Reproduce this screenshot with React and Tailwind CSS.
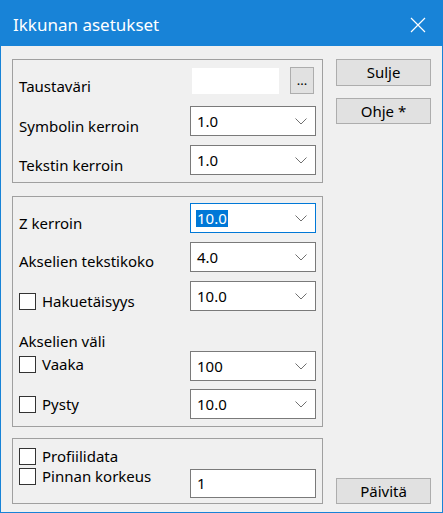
import { useState } from "react";

const font = { fontFamily: '"Noto Sans", "Open Sans", sans-serif' };

function Chevron() {
  return (
    <svg width="12" height="7" viewBox="0 0 12 7" className="shrink-0">
      <path d="M0.5 0.5 L6 6 L11.5 0.5" fill="none" stroke="#707070" strokeWidth="1" />
    </svg>
  );
}

function Combo({ value, focused }) {
  return (
    <div
      className={
        "w-[126px] h-[30px] bg-white flex items-center pl-[6px] pr-[8px] justify-between border " +
        (focused ? "border-[#0078d7]" : "border-[#7a7a7a]")
      }
    >
      {focused ? (
        <span className="bg-[#0078d7] text-white leading-[17px] px-[1px] -ml-[1px]">{value}</span>
      ) : (
        <span className="text-black">{value}</span>
      )}
      <Chevron />
    </div>
  );
}

function Check({ label }) {
  const [on, setOn] = useState(false);
  return (
    <label className="flex items-center cursor-default" onClick={() => setOn(!on)}>
      <span className="w-[17px] h-[17px] border border-[#333] bg-white flex items-center justify-center">
        {on && <span className="w-[9px] h-[9px] bg-[#333]" />}
      </span>
      <span className="ml-[6px] text-black">{label}</span>
    </label>
  );
}

function Row({ children, control, className = "", labelClass = "pt-[10px]" }) {
  return (
    <div className={"flex items-center h-[30px] " + className}>
      <div className={"w-[177px] pl-[6px] text-black " + labelClass}>{children}</div>
      {control}
    </div>
  );
}

function Button({ children, className = "" }) {
  return (
    <button
      className={
        "w-[95px] bg-[#e1e1e1] border border-[#adadad] text-black flex items-center justify-center " +
        className
      }
    >
      {children}
    </button>
  );
}

export default function App() {
  return (
    <div
      className="w-[443px] h-[513px] border border-[#1883d7] bg-[#f0f0f0] flex flex-col text-[15px]"
      style={font}
    >
      <div className="h-[45px] bg-[#1883d7] flex items-center justify-between pl-[12px] pr-[16px] shrink-0">
        <span className="text-white text-[17px] pt-[3px]">Ikkunan asetukset</span>
        <svg width="16" height="16" viewBox="0 0 16 16" className="mt-[3px]">
          <path d="M1 1 L15 15 M15 1 L1 15" stroke="#fff" strokeWidth="1.2" />
        </svg>
      </div>

      <div className="flex pl-[11px] pt-[13px] pb-[8px] flex-1">
        <div className="w-[311px] flex flex-col">
          <div className="border border-[#a0a0a0] h-[124px] pt-[7px] pr-[6px]">
            <div className="flex items-center h-[27px]">
              <div className="w-[177px] pl-[6px] pt-[12px] text-black">Taustaväri</div>
              <div className="w-[87px] h-[26px] bg-white ml-[2px]" />
              <button className="w-[24px] h-[27px] ml-[11px] bg-[#e1e1e1] border border-[#adadad] text-black text-[13px] leading-none flex items-end justify-center pb-[6px]">
                ...
              </button>
            </div>
            <Row className="mt-[12px]" control={<Combo value="1.0" />}>
              Symbolin kerroin
            </Row>
            <Row className="mt-[9px]" control={<Combo value="1.0" />}>
              Tekstin kerroin
            </Row>
          </div>

          <div className="border border-[#a0a0a0] h-[231px] mt-[13px] pt-[6px]">
            <Row control={<Combo value="10.0" focused />}>Z kerroin</Row>
            <Row className="mt-[9px]" labelClass="pt-[8px]" control={<Combo value="4.0" />}>
              Akselien tekstikoko
            </Row>
            <Row className="mt-[9px]" control={<Combo value="10.0" />}>
              <Check label="Hakuetäisyys" />
            </Row>
            <div className="h-[19px] leading-[19px] mt-[21px] pl-[6px] text-black">Akselien väli</div>
            <Row labelClass="pb-[4px]" control={<Combo value="100" />}>
              <Check label="Vaaka" />
            </Row>
            <Row className="mt-[8px]" labelClass="" control={<Combo value="10.0" />}>
              <Check label="Pysty" />
            </Row>
          </div>

          <div className="border border-[#a0a0a0] h-[66px] mt-[11px] pt-[7px]">
            <div className="h-[20px] flex items-center pl-[6px]">
              <Check label="Profiilidata" />
            </div>
            <div className="flex items-start">
              <div className="w-[177px] pl-[6px] h-[20px] flex items-center">
                <Check label="Pinnan korkeus" />
              </div>
              <div className="w-[126px] h-[29px] mt-[3px] bg-white border border-[#7a7a7a] flex items-center pl-[6px] text-black">
                1
              </div>
            </div>
          </div>
        </div>

        <div className="ml-[13px] flex flex-col">
          <Button className="h-[27px]">Sulje</Button>
          <Button className="h-[26px] mt-[12px]">Ohje *</Button>
          <Button className="h-[26px] mt-auto">Päivitä</Button>
        </div>
      </div>
    </div>
  );
}
